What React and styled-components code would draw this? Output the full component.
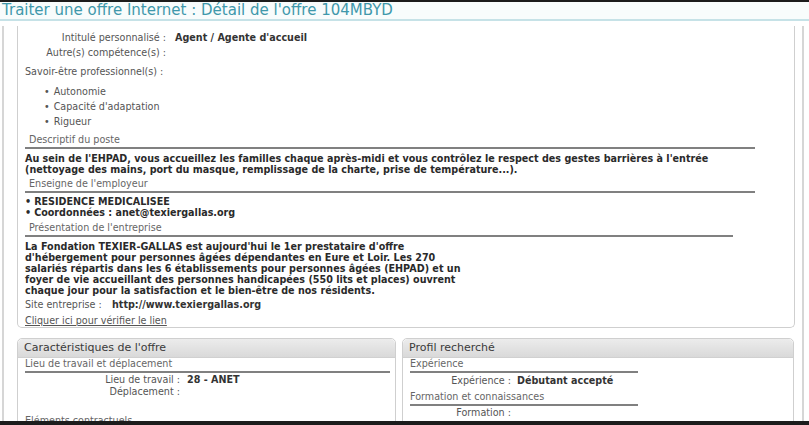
import React from 'react';
import styled, { createGlobalStyle } from 'styled-components';

const GlobalStyle = createGlobalStyle`
  html, body {
    margin: 0;
    padding: 0;
    background: #ffffff;
  }
  body {
    font-family: "DejaVu Sans", Verdana, sans-serif;
    color: #333;
  }
`;

const Page = styled.div`
  width: 809px;
  height: 425px;
  overflow: hidden;
  display: flex;
  flex-direction: column;
  background: #fff;
`;

const TopStrip = styled.div`
  height: 2px;
  background: #1c1c1c;
  flex-shrink: 0;
`;

const BottomStrip = styled.div`
  height: 4px;
  background: #1c1c1c;
  flex-shrink: 0;
`;

const TitleBar = styled.div`
  height: 17px;
  flex-shrink: 0;
  padding-left: 2px;
  background: #f8fcfc;
  border-bottom: 2px solid #c6e2e7;
  color: #3f98ab;
  font-size: 15px;
  line-height: 17px;
  white-space: nowrap;
`;

const Frame = styled.div`
  flex: 1;
  min-height: 0;
  overflow: hidden;
  margin: 5px 5px 0 2px;
  border-left: 2px solid #d6d6d6;
  border-right: 2px solid #d6d6d6;
  padding: 0 7px 0 13px;
`;

const Panel = styled.div`
  border: 1px solid #cfcfcf;
  border-top: none;
  border-radius: 0 0 5px 5px;
  padding: 4px 0 0 7px;
  font-size: 9.6px;
`;

const FieldRow = styled.div`
  display: grid;
  grid-template-columns: ${(p) => p.$labelWidth}px auto;
  column-gap: ${(p) => p.$gap || 9}px;
  height: ${(p) => p.$h || 15}px;
  align-items: center;
`;

const Label = styled.span`
  text-align: ${(p) => (p.$left ? 'left' : 'right')};
  color: #555;
  white-space: nowrap;
`;

const Value = styled.span`
  font-weight: bold;
  color: #333;
  white-space: nowrap;
`;

const PlainLabel = styled.div`
  color: #555;
  height: 20px;
  line-height: 20px;
  margin-top: 2px;
`;

const Bullets = styled.ul`
  list-style: none;
  margin: 0;
  padding: 2px 0 0 19px;
  color: #555;
  li {
    height: 15px;
    line-height: 15px;
  }
  li::before {
    content: '•';
    margin-right: 4px;
  }
`;

const Heading = styled.div`
  width: ${(p) => p.$w}px;
  color: #666;
  padding-left: ${(p) => (p.$indent ? 4 : 0)}px;
  margin-top: ${(p) => p.$mt || 0}px;
  height: 13px;
  line-height: 12px;
  border-bottom: 2px solid #808080;
  white-space: nowrap;
`;

const BoldText = styled.div`
  font-weight: bold;
  color: #2a2a2a;
  line-height: 11px;
  padding-top: ${(p) => p.$pt || 4}px;
  white-space: nowrap;
`;

const BulletBold = styled.div`
  font-weight: bold;
  color: #2a2a2a;
  line-height: 11px;
  padding-top: 3px;
  div::before {
    content: '•';
    margin-right: 3px;
  }
`;

const LinkLine = styled.a`
  display: inline-block;
  margin-top: 2px;
  color: #555;
  text-decoration: underline;
  line-height: 12px;
`;

const Columns = styled.div`
  display: grid;
  grid-template-columns: 379px 392px;
  column-gap: 6px;
  margin-top: 10px;
`;

const Box = styled.div`
  border: 1px solid #cfcfcf;
  border-radius: 5px 5px 0 0;
  font-size: 9.6px;
  height: 100px;
`;

const BoxHeader = styled.div`
  height: 18px;
  line-height: 18px;
  padding-left: 6px;
  font-size: 11px;
  color: #3a3a3a;
  border-radius: 5px 5px 0 0;
  background: linear-gradient(#ececec, #d9d9d9);
  border-bottom: 1px solid #d0d0d0;
`;

const BoxBody = styled.div`
  padding: 0 6px 0 7px;
`;

export default function App() {
  return (
    <Page>
      <GlobalStyle />
      <TopStrip />
      <TitleBar>Traiter une offre Internet : Détail de l'offre 104MBYD</TitleBar>
      <Frame>
        <Panel>
          <FieldRow $labelWidth={141}>
            <Label>Intitulé personnalisé :</Label>
            <Value>Agent / Agente d'accueil</Value>
          </FieldRow>
          <FieldRow $labelWidth={141}>
            <Label>Autre(s) compétence(s) :</Label>
            <Value />
          </FieldRow>
          <PlainLabel>Savoir-être professionnel(s) :</PlainLabel>
          <Bullets>
            <li>Autonomie</li>
            <li>Capacité d'adaptation</li>
            <li>Rigueur</li>
          </Bullets>
          <Heading $w={726} $indent $mt={5}>Descriptif du poste</Heading>
          <BoldText>
            Au sein de l'EHPAD, vous accueillez les familles chaque après-midi et vous contrôlez le respect des gestes barrières à l'entrée
            <br />
            (nettoyage des mains, port du masque, remplissage de la charte, prise de température...).
          </BoldText>
          <Heading $w={726} $indent $mt={3}>Enseigne de l'employeur</Heading>
          <BulletBold>
            <div>RESIDENCE MEDICALISEE</div>
            <div>Coordonnées : anet@texiergallas.org</div>
          </BulletBold>
          <Heading $w={704} $indent $mt={4}>Présentation de l'entreprise</Heading>
          <BoldText>
            La Fondation TEXIER-GALLAS est aujourd'hui le 1er prestataire d'offre
            <br />
            d'hébergement pour personnes âgées dépendantes en Eure et Loir. Les 270
            <br />
            salariés répartis dans les 6 établissements pour personnes âgées (EHPAD) et un
            <br />
            foyer de vie accueillant des personnes handicapées (550 lits et places) ouvrent
            <br />
            chaque jour pour la satisfaction et le bien-être de nos résidents.
          </BoldText>
          <FieldRow $labelWidth={80} $gap={7} $h={17}>
            <Label $left>Site entreprise :</Label>
            <Value>http://www.texiergallas.org</Value>
          </FieldRow>
          <LinkLine>Cliquer ici pour vérifier le lien</LinkLine>
        </Panel>
        <Columns>
          <Box>
            <BoxHeader>Caractéristiques de l'offre</BoxHeader>
            <BoxBody>
              <Heading $w={365}>Lieu de travail et déplacement</Heading>
              <FieldRow $labelWidth={155} $gap={7} $h={12}>
                <Label>Lieu de travail :</Label>
                <Value>28 - ANET</Value>
              </FieldRow>
              <FieldRow $labelWidth={155} $gap={7} $h={12}>
                <Label>Déplacement :</Label>
                <Value />
              </FieldRow>
              <Heading $w={365} $mt={18}>Eléments contractuels</Heading>
            </BoxBody>
          </Box>
          <Box>
            <BoxHeader>Profil recherché</BoxHeader>
            <BoxBody>
              <Heading $w={228}>Expérience</Heading>
              <FieldRow $labelWidth={101} $gap={6} $h={14}>
                <Label>Expérience :</Label>
                <Value>Débutant accepté</Value>
              </FieldRow>
              <Heading $w={228} $mt={4}>Formation et connaissances</Heading>
              <FieldRow $labelWidth={101} $gap={6} $h={13}>
                <Label>Formation :</Label>
                <Value />
              </FieldRow>
            </BoxBody>
          </Box>
        </Columns>
      </Frame>
      <BottomStrip />
    </Page>
  );
}
